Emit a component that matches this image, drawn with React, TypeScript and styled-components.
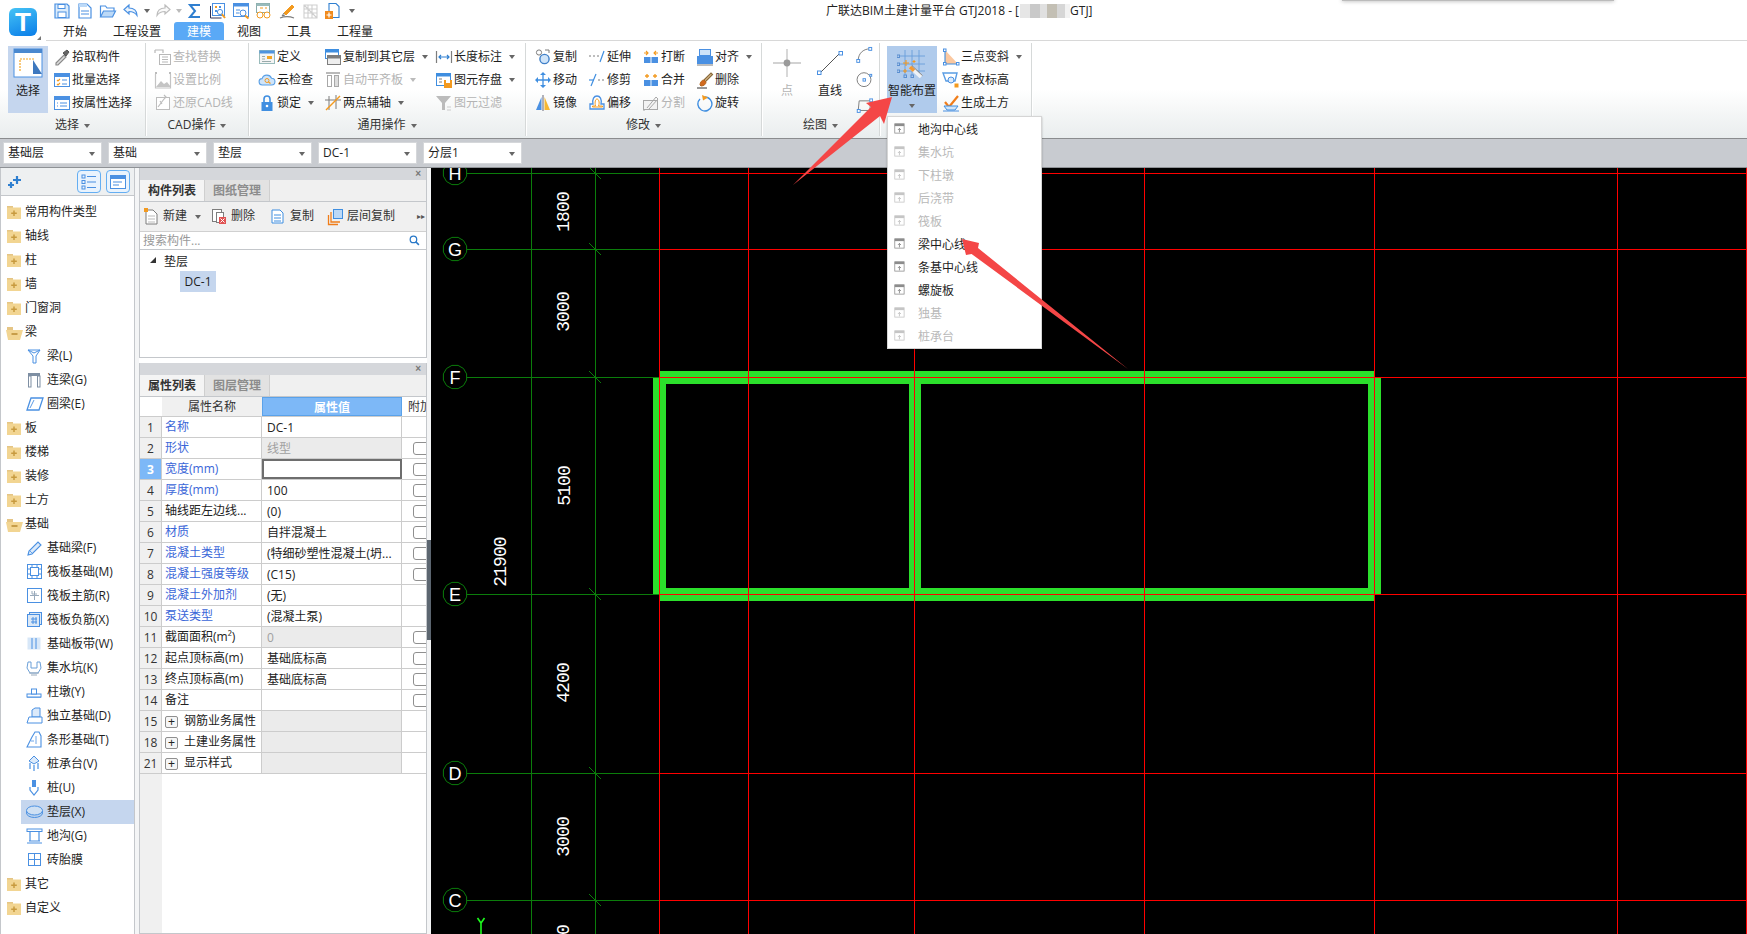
import React from 'react';
import styled, { createGlobalStyle } from 'styled-components';

const FONT = `"Open Sans", "Noto Sans CJK SC", sans-serif`;
const B = '#4a90e2';
const LB = '#bcd9f7';
const O = '#f39a1f';
const G = '#a8a8a8';
const GD = '#7d7d7d';

const Global = createGlobalStyle`
  html, body { margin: 0; padding: 0; overflow: hidden; background: #fff; }
  body { font: 12px/1.2 ${FONT}; color: #1e1e1e; }
`;

const P = (d: string, c = B, w = 1.2, f = 'none') => <path d={d} stroke={c} strokeWidth={w} fill={f} />;
const R = (x: number, y: number, w: number, h: number, f: string, s = 'none') => (
  <rect x={x} y={y} width={w} height={h} fill={f} stroke={s} />
);

const windowIcon = (inner: React.ReactNode, c = B) => (
  <>
    {R(1.5, 2.5, 15, 13, '#fff', c)}
    {R(1.5, 2.5, 15, 3, c, c)}
    {inner}
  </>
);

const ICONS: Record<string, React.ReactNode> = {
  save: <>{P('M2 2h12l2 2v12H2z', B, 1.2, '#dcecfb')}{R(5, 2.5, 7, 4, '#fff', B)}{R(5, 10, 8, 5.5, '#fff', B)}</>,
  newdoc: <>{P('M3 2h8l4 4v10H3z', B, 1.2, '#fff')}{R(3, 2, 8, 3, LB)}{P('M5 9h8M5 12h8', B)}</>,
  open: <>{P('M1.5 15V4h5l1.5 2h7v3', B, 1.2, '#fff')}{P('M1.5 15l3-6h12l-3 6z', B, 1.2, LB)}</>,
  undo: <>{P('M7 3L2 7.5 7 12V9.5c4 0 6 1 8 4 0-5-3-7.5-8-7.5z', B, 1.2, '#eaf3fc')}</>,
  redo: <>{P('M11 3l5 4.5L11 12V9.5c-4 0-6 1-8 4 0-5 3-7.5 8-7.5z', '#bdbdbd', 1.2, '#fafafa')}</>,
  sigma: <>{P('M14 3H4l5 6-5 6h10', '#2f7fd0', 2)}</>,
  qaDots: <>{R(3.5, 1.5, 12, 12, '#fff', B)}{R(6, 4, 2, 2, O)}{R(10, 4, 2, 2, B)}{R(6, 8, 2, 2, B)}{R(10, 8, 2, 2, B)}{P('M1.5 4v12h11', '#335', 1)}{P('M12 11l4 5', O, 2)}<circle cx="11" cy="10" r="2.6" fill="#fff" stroke={B} /></>,
  qaFind: <>{R(1.5, 1.5, 15, 13, '#fff', B)}{R(1.5, 1.5, 15, 3, B)}{P('M4 8h4M4 11h3', B)}<circle cx="11" cy="11" r="3" fill="#fff" stroke={B} />{P('M13 13.5l3.5 3', O, 2)}</>,
  qaGlass: <>{R(1.5, 1.5, 13, 9, '#fff', '#8aa')}{R(1.5, 1.5, 13, 2.5, '#9bb')}{P('M5 6h3M10 6h2', O)}<circle cx="5" cy="13" r="3" fill="#fff" stroke={O} /><circle cx="12" cy="13" r="3" fill="#fff" stroke={O} /></>,
  qaPen: <>{P('M6 11L14 3l2 2-8 8z', O, 1, O)}{P('M6 11l-2 3 3-1', '#777', 1)}{P('M2 16c5-2 9-2 14 0', GD, 1.2)}</>,
  qaGrid: <>{P('M3 3h13v13H3zM3 7h13M3 11h13M7 3v13M11 3v13M3 3l13 13', '#cfcfcf', 1.1)}</>,
  qaPlus: <>{P('M5 1.5h7l3 3v11H5z', '#2f7fd0', 1.1, '#fff')}{R(1, 9, 8, 8, '#f08a1d')}{P('M5 10.5v5M2.5 13h5', '#fff', 1.2)}</>,
  select: <>{R(1, 1, 28, 28, '#fff', B)}{R(1, 1, 28, 4, '#4a88cf')}<path d="M7 23V11h15" stroke="#f5a623" strokeWidth="1.2" strokeDasharray="2 1" fill="none" /><path d="M20 12v14h9z" fill="#3d78bf" /></>,
  pick: <>{P('M3 15l8-8 2 2-8 8H3z', '#8a8a8a', 1.2, '#ddd')}{P('M10 5l3 3 3-4-2-2z', '#555', 1, '#666')}</>,
  batch: windowIcon(<>{P('M4 9l1 1 2-2M4 13l1 1 2-2', O, 1.1)}{P('M9 9h5M9 13h5', B)}</>),
  propsel: windowIcon(<>{P('M4 9h1M4 12h1M7 9h7M7 12h7', B)}</>),
  gFind: <>{P('M1 2h8v3M1 2v3', '#b8b8b8')}{R(5.5, 6.5, 11, 10, '#fff', '#b8b8b8')}{P('M8 9h6M8 11.5h6M8 14h6', '#b8b8b8')}</>,
  gScale: <>{P('M1.5 3v14h15V3', '#c4c4c4')}<path d="M2 16l5-6 3 3 3-2 4 5z" fill="#c4c4c4" />{R(1, 1, 2, 2, '#bbb')}{R(15, 1, 2, 2, '#bbb')}</>,
  gRestore: <>{R(2.5, 3.5, 13, 12, '#fff', '#bdbdbd')}{P('M4 13L10 5M6 7l2 3', '#bdbdbd', 1.2)}{P('M10 1l2 2-2 2', '#bdbdbd')}</>,
  define: <>{R(1.5, 2.5, 15, 13, '#f4f4f4', '#9bb')}{R(1.5, 2.5, 15, 3, '#4f93de')}{R(9, 8, 5, 3, '#f5a623')}{P('M4 8.5h3M4 11h3M4 13.5h9', '#9aa')}</>,
  cloud: <>{P('M4.5 14a3.2 3.2 0 0 1-.4-6.4 5 5 0 0 1 9.4-.4A3.4 3.4 0 0 1 13.6 14z', '#5aa0e6', 1.1, '#cfe4f9')}<circle cx="9" cy="9.5" r="2" fill="none" stroke={O} />{P('M10.5 11l2 1.5', O)}</>,
  lock: <>{P('M6 8V5a3 3 0 0 1 6 0v3', '#3f8ee0', 1.6)}{R(3.5, 8, 11, 9, '#3f8ee0')}<circle cx="9" cy="12" r="1.3" fill="#fff" /></>,
  copyto: <>{R(1.5, 1.5, 13, 9, '#fff', '#3f8ee0')}{R(1.5, 1.5, 13, 3, '#3f8ee0')}{R(3.5, 7.5, 13, 9, '#eee', GD)}{R(3.5, 7.5, 13, 3, GD)}</>,
  gAuto: <>{P('M2 2h14', G, 1.6)}{R(3.5, 4.5, 4, 11, '#fff', G)}{R(10.5, 4.5, 4, 11, '#ddd', G)}</>,
  twoPt: <>{P('M5 2v14M12 1v14M1 6h16', GD, 1)}{P('M2 16L16 2', O, 1.4)}</>,
  length: <>{P('M1.5 3v12M16.5 3v12', GD)}{P('M4 9h10M6 7L4 9l2 2M12 7l2 2-2 2', '#2f7fd0')}</>,
  saveEl: <>{R(1.5, 2.5, 14, 12, '#fff', '#3f8ee0')}{R(1.5, 2.5, 14, 3, '#3f8ee0')}{P('M4 8h3M4 11h3', GD)}{R(9, 9, 8, 8, O)}{R(11, 9, 4, 3, '#fff')}</>,
  gFilter: <><path d="M1 2h15l-6 7v7H7V9z" fill="#bbb" />{P('M12 13h4M12 16h4', '#ccc')}</>,
  copy: <><circle cx="5" cy="4.5" r="2.6" fill="#fff" stroke={GD} /><circle cx="10.5" cy="11" r="4.6" fill="#cfe4f9" stroke="#3f7fc8" strokeWidth="1.4" />{P('M11 2h4v3', GD, 1)}</>,
  extend: <>{P('M1 8h2M5 8h2M9 8h2', GD, 1)}{P('M12 14l4-11', '#3f8ee0', 1.2)}</>,
  trim: <>{P('M1 9h5', '#3f8ee0', 1.2)}{P('M10 9h2M14 9h2', GD, 1)}{P('M3 15l5-12', '#3f8ee0', 1.2)}</>,
  breakI: <>{R(2, 9, 6.5, 6, '#4a90e2')}{R(9.5, 9, 6.5, 6, '#4a90e2')}{P('M2 5h4M4 3l2 2-2 2M16 5h-4M14 3l-2 2 2 2', O, 1.1)}</>,
  merge: <>{R(2, 9, 14, 6, '#4a90e2')}{P('M9 9v6', '#cfe4f9')}{P('M5 3v4M3 5h4M13 3v4M11 5h4', O, 1.3)}</>,
  alignI: <>{R(3.5, 1.5, 11, 6, '#cfe4f9', B)}{R(1.5, 8.5, 15, 7, '#4a90e2', B)}{P('M1 17h16', GD, 1)}</>,
  move: <>{P('M9 4v10M4 9h10', '#3f8ee0', 1.3)}<path d="M9 1l3 3H6zM9 17l3-3H6zM1 9l3-3v6zM17 9l-3-3v6z" fill="#3f8ee0" /></>,
  del: <>{P('M8 9l7-7 1.5 1.5-7 7', '#8a6a3a', 1.2, '#e6c79a')}{P('M4 14c0-3 2-5 4-5l2 2c0 2-2 4-5 4z', '#b5651d', 1, '#d2691e')}{P('M1 17h10', '#333', 1)}</>,
  mirror: <><path d="M7.5 3v13H2z" fill="#4a90e2" /><path d="M10.5 3v13H16z" fill="#f7b733" />{P('M9 1v16', '#667', 1)}</>,
  offset: <>{P('M2 15V10h3c-1-5 1-8 4-8s5 3 4 8h3v5z', '#4a90e2', 1.3, '#fff')}{P('M4.5 13v-1h3c-1-4 0-7 1.5-7s3 3 1.5 7h4v1z', O, 1, '#fff')}</>,
  split: <>{R(1.5, 6.5, 14, 9, '#f3f3f3', G)}{P('M5 14l9-11 2 2-9 10', G, 1)}{P('M1 16h2', G)}</>,
  rotate: <>{P('M9 3a7 7 0 1 1-5 2', '#3f8ee0', 1.4)}<path d="M6 1l6 2.5-5 3z" fill={O} /></>,
  point: <>{P('M15 1v28M1 15h28', '#c4c4c4', 1.3)}<circle cx="15" cy="15" r="3.4" fill="#9a9a9a" /></>,
  line: <>{P('M5 25L25 5', '#555', 1)}{R(2.5, 23, 3.5, 3.5, '#fff', B)}{R(24, 3.5, 3.5, 3.5, '#fff', B)}</>,
  arc: <>{P('M3 15C3 8 8 3 15 3', GD, 1)}{R(1.5, 14, 3, 3, '#fff', B)}{R(14, 1.5, 3, 3, '#fff', B)}</>,
  circleI: <><circle cx="9" cy="9" r="7.2" fill="#fff" stroke={GD} />{R(8, 8, 2.5, 2.5, '#fff', B)}{R(15, 3.5, 2, 2, '#fff', B)}</>,
  rectI: <>{P('M3 14L4 4h12l-1 10z', GD, 1)}{R(2, 13, 3, 3, '#fff', B)}{R(15, 2, 3, 3, '#fff', B)}</>,
  smart: <>
    {P('M1 8h27M1 16h27M1 23h27M8 2v25M15 2v25M22 2v25', '#6a9edb', 0.9)}
    {R(0, 7, 2.5, 2.5, '#b0cbec', '#5b8fd0')}{R(0, 15, 2.5, 2.5, '#b0cbec', '#5b8fd0')}{R(0, 22, 2.5, 2.5, '#b0cbec', '#5b8fd0')}
    {R(7, 27, 2.5, 2.5, '#b0cbec', '#5b8fd0')}{R(14, 27, 2.5, 2.5, '#b0cbec', '#5b8fd0')}
    {P('M13 19l11 10', '#eef2f6', 3.6)}{P('M13 19l4 3.6', '#f29a35', 3.6)}{P('M15 17.6l10.5 10', '#8a7a66', 0.8)}
    {P('M9 12v6M6 15h6M17 12v3M15.5 13.5h3M8 21v4M6 23h4', O, 1.1)}
  </>,
  three: <><path d="M3 2l13 14H3z" fill="#fbc8a0" />{P('M3 2v14h13', '#3f8ee0', 1.1)}{R(1.5, 1, 2.5, 2.5, '#fff', B)}{R(1.5, 14.5, 2.5, 2.5, '#fff', B)}{R(14.5, 14.5, 2.5, 2.5, '#fff', B)}</>,
  height: <>{P('M1 2h14l-2 8H4z', '#5a9de4', 1.4, '#fff')}<circle cx="9" cy="9" r="3" fill="#dcebfa" stroke={B} />{R(12.5, 12.5, 4, 4, O)}</>,
  earth: <>{P('M3 8l4 5 9-11', '#f07d1a', 2.2)}{P('M2 12h14l-3 4H5z', '#3f8ee0', 1, '#cfe4f9')}{P('M1 17h16', B, 1)}</>,
  itemUp: <>{R(1, 1, 12, 12, '#fff', '#8c8c8c')}{R(1, 1, 12, 3, '#8c8c8c')}{P('M7 12V7M5 9l2-2 2 2', '#7a7a7a', 1)}</>,
  sparkle: <>{P('M10 3v8M6 7h8', '#2f7fd0', 2.2)}{P('M4 9v6M1 12h6', '#2f7fd0', 2.2)}</>,
  listMode: <>{R(2, 2, 3, 3, 'none', B)}{R(2, 7.5, 3, 3, 'none', B)}{R(2, 13, 3, 3, 'none', B)}{P('M7 3.5h9M7 9h9M7 14.5h9', B, 1.2)}</>,
  cardMode: <>{R(1.5, 2.5, 15, 13, '#fff', B)}{R(1.5, 2.5, 15, 3.5, B)}{P('M4 9h9M4 12h6', B)}</>,
  fClosed: <>{R(1, 3, 6, 3, '#e5c585')}{R(1, 4.5, 14, 11.5, '#f2d592')}{P('M8 7.5v5.5M5.2 10.2h5.6', '#c79a3f', 1.5)}</>,
  fOpen: <>{R(1, 4, 6, 3, '#e5c585')}<path d="M0 7h17l-3 10H2z" fill="#f2d592" />{P('M5.5 11h6', '#b98a30', 1.5)}</>,
  beam: <>{P('M2 3h12L10 9v7H7V9z', B, 1, '#fff')}{P('M2 3l6 3 6-3', B, 1)}</>,
  lianL: <>{R(2, 2, 12, 3, '#7e8fa3')}{R(2.5, 5, 2.5, 11, '#fff', '#7e8fa3')}{R(11.5, 5, 2.5, 11, '#fff', '#7e8fa3')}</>,
  ring: <>{P('M5 3h12l-4 12H1z', B, 1.3, '#fff')}{P('M4 13L8 5', B, .9)}</>,
  pen: <>{P('M2 16l1-4L12 3l3 3-9 9z', B, 1.1, '#dceafa')}{P('M4 12l3 3', B, .8)}</>,
  raft: <>{R(1.5, 1.5, 14, 14, '#fff', B)}{R(4.5, 4.5, 8, 8, '#fff', B)}{P('M1.5 6h3M1.5 11h3M12 6h3M12 11h3M6 1.5v3M11 1.5v3M6 12v3M11 12v3', B, 1)}</>,
  raftM: <>{R(1.5, 1.5, 14, 14, '#fff', B)}{P('M8.5 4v9M4 8.5h9M6 4v3M6 7h5', '#9ab', 1)}</>,
  raftN: <>{R(3.5, 1.5, 12, 12, '#dbe8f6', B)}{R(1.5, 3.5, 12, 12, '#dbe8f6', B)}{P('M5 8h6M5 11h6M7 6v7M10 6v7', B, 1)}</>,
  band: <>{R(1.5, 2.5, 13, 12, '#d7e7f8')}{P('M6 3v11M10 3v11', '#4a90e2', 1, 'none')}</>,
  pit: <>{P('M2 3l3 0 0 6h6V3h3l1 6-3 5H4l-3-5z', '#6a9fd8', 1, '#fff')}{P('M3 14h10M5 16h6', '#9ab', 1)}</>,
  pier: <>{P('M1 14h14', B, 1.2)}{R(1, 11, 14, 3, '#fff', B)}{R(5.5, 6, 5, 5, '#fff', B)}</>,
  isolated: <>{P('M6 10V3l3-2h5v9z', B, 1, '#dceafa')}{P('M1 16l2-6h13v6z', B, 1, '#fff')}</>,
  strip: <>{P('M1 16l3-6 2-4 3-5h4l2 4v11z', B, 1.1, '#fff')}{P('M5 10l3 0M10 5v8', B, .8)}</>,
  cap: <>{P('M8 1l5 5-5 3-5-3z', B, 1, '#dceafa')}{P('M4 8v6M8 10v6M12 8v6', B, 1.2)}</>,
  pile: <>{R(6, 1, 4, 8, B)}{P('M4 8l0 3 4 5 4-5V8', B, 1.2, '#fff')}</>,
  disc: <><ellipse cx="8.5" cy="10" rx="8" ry="4.5" fill="#bcd3ee" stroke={B} />{P('M.5 8c0 3 16 3 16 0', B)}<ellipse cx="8.5" cy="7.5" rx="8" ry="4.5" fill="#cfe0f3" stroke={B} /></>,
  trench: <>{R(1, 2, 15, 2.5, '#fff', B)}{P('M4 4.5v9M13 4.5v9M1 16h15M3 14h11', B, 1.2)}</>,
  brick: <>{R(2.5, 2.5, 12, 12, '#fff', B)}{P('M8.5 3v11M3 8.5h11', B, 1)}</>,
  newI: <>{P('M3 2h7l4 4v10H3z', GD, 1, '#fff')}{P('M5 8h7M5 11h7M5 14h7', '#bbb', 1)}{R(1, 0, 4, 4, O)}</>,
  delI: <>{R(1.5, 1.5, 9, 12, '#fff', GD)}{R(5.5, 4.5, 7, 10, '#fff', GD)}{R(8, 9, 7, 7, '#e05252')}{P('M9.5 10.5l4 4M13.5 10.5l-4 4', '#fff', 1)}</>,
  copyI: <>{P('M2 2h8l3 3v10H2z', '#3f8ee0', 1, '#fff')}{P('M4 7h7M4 10h7M4 13h7', '#3f8ee0', 1)}</>,
  layerI: <>{R(6.5, 1.5, 9, 9, '#bcd9f7', '#3f8ee0')}{P('M4 4v10h9M1.5 7v9.5H11', '#f07d1a', 1.3)}</>,
  search: <><circle cx="7" cy="7" r="4.2" fill="none" stroke="#2878c8" strokeWidth="1.6" />{P('M10 10l4 4', '#2878c8', 2)}</>,
};

const Glyph = ({ name, size = 18 }: { name: string; size?: number }) => (
  <svg width={size} height={size} viewBox={size === 30 ? '0 0 30 30' : '0 0 18 18'}>
    {ICONS[name]}
  </svg>
);

/* ---------- shell ---------- */
const Shell = styled.div`
  position: relative;
  width: 1747px;
  height: 934px;
  overflow: hidden;
  display: flex;
  flex-direction: column;
  background: #fff;
`;
const TitleBar = styled.header`
  height: 40px;
  display: flex;
  border-bottom: 1px solid #d8d8d8;
  flex: none;
`;
const LogoArea = styled.div`
  position: relative;
  width: 46px;
  height: 41px;
  background: #fff;
  flex: none;
  margin-bottom: -1px;
`;
const LogoTile = styled.div`
  position: absolute;
  left: 9px;
  top: 8px;
  width: 28px;
  height: 28px;
  border-radius: 6px;
  background: linear-gradient(160deg, #45c3f5, #0a7de8);
  color: #fff;
  font: 700 26px/28px "Liberation Sans", sans-serif;
  text-align: center;
`;
const LogoCorner = styled.i`
  position: absolute;
  left: 37px;
  top: 36px;
  border-style: solid;
  border-width: 0 0 4px 4px;
  border-color: transparent transparent #777 transparent;
`;
const TitleColumn = styled.div`
  display: flex;
  flex-direction: column;
  flex: 1;
`;
const QuickRow = styled.div`
  height: 22px;
  display: flex;
  align-items: center;
`;
const QuickBar = styled.div`
  width: 780px;
  flex: none;
  display: flex;
  align-items: center;
  height: 22px;
`;
const QuickSlot = styled.span<{ $w: number }>`
  width: ${p => p.$w}px;
  flex: none;
  display: flex;
  align-items: center;
  justify-content: center;
`;
const WindowTitle = styled.div`
  white-space: nowrap;
  display: flex;
  align-items: center;
  font-size: 12px;
  color: #222;
`;
const Redacted = styled.span`
  width: 50px;
  height: 14px;
  margin-left: 1px;
  background: linear-gradient(90deg, #e6e6e6 0 20%, #c9c9c9 20% 40%, #e0e0e0 40% 55%, #c3bfb4 55% 75%, #d6d6d6 75% 90%, #f2f2f2 90%);
`;
const TabRow = styled.nav`
  height: 18px;
  display: flex;
  margin-left: 4px;
`;
const Tab = styled.div<{ $active?: boolean }>`
  padding: 0 13px;
  height: 18px;
  line-height: 20px;
  color: ${p => (p.$active ? '#fff' : '#222')};
  background: ${p => (p.$active ? '#5aa9f6' : 'transparent')};
  border-radius: 3px 3px 0 0;
`;
const ShadowStrip = styled.div`
  position: absolute;
  left: 1342px;
  top: -2px;
  width: 272px;
  height: 3px;
  background: #bbb;
  box-shadow: 0 0 4px rgba(0, 0, 0, 0.35);
`;

/* ---------- ribbon ---------- */
const Ribbon = styled.section`
  height: 97px;
  flex: none;
  display: flex;
  border-bottom: 1px solid #8a8c8e;
  background: linear-gradient(#fff 0, #fff 50%, #f4f6f6 75%, #e9edee 100%);
`;
const Group = styled.div<{ $w: number }>`
  width: ${p => p.$w}px;
  flex: none;
  box-sizing: border-box;
  margin: 2px 0;
  display: flex;
  flex-direction: column;
  border-right: 1px solid #d6d9d9;
  box-shadow: 1px 0 0 #fff;
`;
const GroupBody = styled.div<{ $pad?: number; $gap?: number }>`
  height: 71px;
  flex: none;
  box-sizing: border-box;
  padding: 2px 0 0 ${p => p.$pad ?? 8}px;
  display: flex;
  gap: ${p => p.$gap ?? 0}px;
`;
const GroupLabel = styled.div`
  height: 22px;
  padding-top: 1px;
  box-sizing: border-box;
  display: flex;
  align-items: center;
  justify-content: center;
  gap: 5px;
  color: #333;
`;
const Caret = styled.i<{ $tone?: string }>`
  display: inline-block;
  flex: none;
  border-style: solid;
  border-width: 4px 3.5px 0;
  border-color: ${p => p.$tone ?? '#666'} transparent transparent;
`;
const BigButton = styled.div<{ $w: number; $bg?: string; $off?: boolean }>`
  width: ${p => p.$w}px;
  height: 67px;
  margin-top: 1px;
  box-sizing: border-box;
  padding-top: 2px;
  flex: none;
  display: flex;
  flex-direction: column;
  align-items: center;
  background: ${p => p.$bg ?? 'transparent'};
  color: ${p => (p.$off ? '#b4b4b4' : '#1e1e1e')};
`;
const BigText = styled.span`
  line-height: 18px;
  margin-top: 4px;
  margin-bottom: 4px;
  white-space: nowrap;
`;
const Column = styled.div<{ $w?: number }>`
  width: ${p => (p.$w ? `${p.$w}px` : 'auto')};
  flex: none;
  display: flex;
  flex-direction: column;
`;
const SmallItem = styled.div<{ $off?: boolean }>`
  height: 23px;
  display: flex;
  align-items: center;
  gap: 1px;
  white-space: nowrap;
  color: ${p => (p.$off ? '#b4b4b4' : '#1e1e1e')};
`;
const SmallText = styled.span`
  padding-top: 1px;
`;
const SmallCaret = styled(Caret)`
  margin-left: 6px;
`;

const Small = ({ icon, text, off, caret }: { icon: string; text: string; off?: boolean; caret?: boolean }) => (
  <SmallItem $off={off}>
    <Glyph name={icon} />
    <SmallText>{text}</SmallText>
    {caret && <SmallCaret $tone={off ? '#bbb' : '#666'} />}
  </SmallItem>
);

const IconStack = styled.div`
  width: 36px;
  display: flex;
  flex-direction: column;
  align-items: center;
  padding-top: 1px;
  gap: 8px;
`;

/* ---------- combos ---------- */
const ComboBar = styled.div`
  height: 29px;
  flex: none;
  box-sizing: border-box;
  padding: 3px 0 0 3px;
  display: flex;
  gap: 6px;
  background: #c8cbd0;
  border-bottom: 1px solid #8f9296;
`;
const Combo = styled.div`
  width: 99px;
  height: 22px;
  box-sizing: border-box;
  padding: 1px 6px 0 4px;
  background: #fff;
  border: 1px solid #d5d7da;
  display: flex;
  align-items: center;
  justify-content: space-between;
`;

/* ---------- main ---------- */
const Main = styled.main`
  flex: 1;
  min-height: 0;
  display: flex;
`;
const Sidebar = styled.aside`
  width: 135px;
  flex: none;
  box-sizing: border-box;
  border-left: 1px solid #c4c7cb;
  border-right: 1px solid #c4c7cb;
  display: flex;
  flex-direction: column;
`;
const SideTop = styled.div`
  height: 27px;
  flex: none;
  background: #eef0f1;
  border-bottom: 1px solid #c4c7cb;
  display: flex;
  align-items: center;
  padding: 0 4px 0 6px;
`;
const ModeButton = styled.div`
  width: 24px;
  height: 23px;
  box-sizing: border-box;
  border: 1px solid #64aef2;
  border-radius: 4px;
  background: #e9f3fd;
  margin-left: 5px;
  display: flex;
  align-items: center;
  justify-content: center;
`;
const SpacerGrow = styled.span`
  flex: 1;
`;
const Tree = styled.div`
  padding-top: 4px;
`;
const TreeRow = styled.div<{ $child?: boolean; $sel?: boolean }>`
  height: 24px;
  display: flex;
  align-items: center;
  box-sizing: border-box;
  gap: ${p => (p.$child ? 3 : 1)}px;
  margin-left: ${p => (p.$child ? 20 : 0)}px;
  padding-left: 5px;
  background: ${p => (p.$sel ? '#c5d6ee' : 'transparent')};
  white-space: nowrap;
`;
const Gutter = styled.div`
  width: 4px;
  flex: none;
  background: #f4f5f6;
`;
const PanelColumn = styled.div`
  width: 288px;
  flex: none;
  display: flex;
  flex-direction: column;
  gap: 5px;
`;
const Panel = styled.section<{ $fill?: boolean }>`
  flex: ${p => (p.$fill ? '1' : 'none')};
  height: ${p => (p.$fill ? 'auto' : '190px')};
  box-sizing: border-box;
  border: 1px solid #c4c7cb;
  border-top: none;
  overflow: hidden;
  display: flex;
  flex-direction: column;
`;
const PanelHead = styled.div`
  height: 12px;
  flex: none;
  background: #d5d7db;
  color: #777;
  font: 700 10px/12px "Liberation Sans", sans-serif;
  text-align: right;
  padding-right: 5px;
`;
const PanelTabs = styled.div`
  height: 21px;
  flex: none;
  display: flex;
  background: #f0f0f0;
  border-bottom: 1px solid #c4c7cb;
`;
const PanelTab = styled.div<{ $on?: boolean }>`
  width: 64px;
  text-align: center;
  line-height: 21px;
  font-weight: 700;
  color: ${p => (p.$on ? '#333' : '#8c8c8c')};
  background: ${p => (p.$on ? '#f4f4f4' : '#e2e2e2')};
  border-right: 1px solid #cfcfcf;
`;
const PanelTools = styled.div`
  height: 29px;
  flex: none;
  display: flex;
  align-items: center;
  background: #f0f0f0;
  border-bottom: 1px solid #d0d0d0;
  padding-left: 3px;
`;
const ToolButton = styled.div<{ $w: number }>`
  width: ${p => p.$w}px;
  flex: none;
  display: flex;
  align-items: center;
  gap: 2px;
  white-space: nowrap;
  color: #333;
`;
const MoreMark = styled.span`
  font: 8px "DejaVu Sans", sans-serif;
  color: #555;
  margin-left: 18px;
`;
const SearchBox = styled.div`
  height: 18px;
  flex: none;
  display: flex;
  align-items: center;
  justify-content: space-between;
  padding: 1px 4px 0 3px;
  box-sizing: border-box;
  color: #999;
  border-bottom: 1px solid #c4c7cb;
`;
const CompTree = styled.div`
  flex: 1;
  padding: 0 0 0 24px;
`;
const CompHead = styled.div`
  position: relative;
  height: 21px;
  line-height: 23px;
`;
const CompTriangle = styled.i`
  position: absolute;
  left: -14px;
  top: 7px;
  border-style: solid;
  border-width: 0 0 6px 6px;
  border-color: transparent transparent #333 transparent;
`;
const CompItem = styled.div`
  width: 36px;
  height: 21px;
  line-height: 21px;
  margin-left: 16px;
  text-align: center;
  background: #c5d6ee;
`;

/* ---------- table ---------- */
const Row = styled.div`
  display: grid;
  grid-template-columns: 22px 100px 140px 25px;
  height: 21px;
  flex: none;
  box-sizing: border-box;
  border-bottom: 1px solid #cccccc;
`;
const HeadRow = styled(Row)`
  height: 20px;
`;
const HeadBlank = styled.div`
  background: #fff;
`;
const HeadCell = styled.div<{ $on?: boolean }>`
  text-align: center;
  line-height: 19px;
  overflow: hidden;
  white-space: nowrap;
  background: ${p => (p.$on ? '#7db8f7' : '#f0f0f0')};
  color: ${p => (p.$on ? '#fff' : '#333')};
  font-weight: ${p => (p.$on ? 700 : 400)};
  border: ${p => (p.$on ? '1px solid #5aa2ea' : 'none')};
`;
const HeadCut = styled(HeadCell)`
  text-align: left;
  padding-left: 6px;
  background: #fff;
  box-sizing: border-box;
`;
const IndexCell = styled.div<{ $on?: boolean }>`
  text-align: center;
  line-height: 22px;
  height: 20px;
  overflow: hidden;
  background: ${p => (p.$on ? '#7db8f7' : '#f0f0f0')};
  color: ${p => (p.$on ? '#fff' : '#333')};
  font-weight: ${p => (p.$on ? 700 : 400)};
  border-right: 1px solid #cccccc;
`;
const NameCell = styled.div<{ $blue?: boolean }>`
  padding: 1px 0 0 3px;
  box-sizing: border-box;
  height: 20px;
  color: ${p => (p.$blue ? '#3a66d8' : '#222')};
  border-right: 1px solid #cccccc;
  white-space: nowrap;
  overflow: hidden;
  display: flex;
  align-items: center;
  gap: 6px;
`;
const ValueCell = styled.div<{ $shade?: boolean; $grey?: boolean; $sel?: boolean }>`
  box-sizing: border-box;
  height: 20px;
  padding-left: ${p => (p.$sel ? 3 : 5)}px;
  line-height: 22px;
  color: ${p => (p.$grey ? '#a0a0a0' : '#222')};
  background: ${p => (p.$shade ? '#ebebeb' : '#fff')};
  border-right: 1px solid #cccccc;
  border: ${p => (p.$sel ? '2px solid #6e6e6e' : undefined)};
  white-space: nowrap;
  overflow: hidden;
`;
const ExtraCell = styled.div`
  overflow: hidden;
  display: flex;
  align-items: center;
  padding-left: 11px;
`;
const CheckBox = styled.i`
  width: 18px;
  height: 13px;
  flex: none;
  box-sizing: border-box;
  border: 1px solid #8f8f8f;
  border-radius: 3px;
  background: #fff;
`;
const PlusBox = styled.i`
  width: 13px;
  height: 12px;
  flex: none;
  box-sizing: border-box;
  border: 1px solid #8f8f8f;
  border-radius: 2px;
  background: #f6f6f6;
  color: #222;
  font: 400 12px/10px "Liberation Sans", sans-serif;
  text-align: center;
`;
const FootIndex = styled.div`
  width: 22px;
  flex: 1;
  background: #f0f0f0;
`;

/* ---------- splitter + canvas ---------- */
const Splitter = styled.div`
  width: 4px;
  flex: none;
  background: #f4f5f6;
  position: relative;
`;
const Grip = styled.div`
  position: absolute;
  top: 372px;
  left: 0;
  width: 4px;
  height: 100px;
  background: #5c6670;
`;
const Canvas = styled.div`
  flex: 1;
  background: #000;
  min-width: 0;
  line-height: 0;
`;

/* ---------- overlays ---------- */
const Menu = styled.div`
  position: absolute;
  left: 887px;
  top: 116px;
  width: 155px;
  box-sizing: border-box;
  padding: 1px 0 0;
  background: #fff;
  border: 1px solid #d5d5d5;
  box-shadow: 0 1px 2px rgba(0, 0, 0, 0.25);
  z-index: 3;
`;
const MenuItem = styled.div<{ $off?: boolean }>`
  height: 23px;
  display: flex;
  align-items: center;
  gap: 10px;
  padding: 1px 0 0 6px;
  box-sizing: border-box;
  color: ${p => (p.$off ? '#b9b9b9' : '#1e1e1e')};
`;
const MenuIcon = styled.span<{ $off?: boolean }>`
  display: flex;
  opacity: ${p => (p.$off ? 0.5 : 1)};
`;
const ArrowLayer = styled.svg`
  position: absolute;
  left: 0;
  top: 0;
  pointer-events: none;
  z-index: 4;
`;

const SIDE: [string, string, boolean?, boolean?][] = [
  ['fClosed', '常用构件类型'], ['fClosed', '轴线'], ['fClosed', '柱'], ['fClosed', '墙'], ['fClosed', '门窗洞'],
  ['fOpen', '梁'], ['beam', '梁(L)', true], ['lianL', '连梁(G)', true], ['ring', '圈梁(E)', true],
  ['fClosed', '板'], ['fClosed', '楼梯'], ['fClosed', '装修'], ['fClosed', '土方'],
  ['fOpen', '基础'], ['pen', '基础梁(F)', true], ['raft', '筏板基础(M)', true], ['raftM', '筏板主筋(R)', true],
  ['raftN', '筏板负筋(X)', true], ['band', '基础板带(W)', true], ['pit', '集水坑(K)', true], ['pier', '柱墩(Y)', true],
  ['isolated', '独立基础(D)', true], ['strip', '条形基础(T)', true], ['cap', '桩承台(V)', true], ['pile', '桩(U)', true],
  ['disc', '垫层(X)', true, true], ['trench', '地沟(G)', true], ['brick', '砖胎膜', true],
  ['fClosed', '其它'], ['fClosed', '自定义'],
];

type PropRow = { n: string; name: string; value?: string; blue?: boolean; check?: boolean; shade?: boolean; grey?: boolean; sel?: boolean; plus?: boolean };
const PROPS: PropRow[] = [
  { n: '1', name: '名称', value: 'DC-1', blue: true },
  { n: '2', name: '形状', value: '线型', blue: true, check: true, shade: true, grey: true },
  { n: '3', name: '宽度(mm)', value: '', blue: true, check: true, sel: true },
  { n: '4', name: '厚度(mm)', value: '100', blue: true, check: true },
  { n: '5', name: '轴线距左边线...', value: '(0)', check: true },
  { n: '6', name: '材质', value: '自拌混凝土', blue: true, check: true },
  { n: '7', name: '混凝土类型', value: '(特细砂塑性混凝土(坍...', blue: true, check: true },
  { n: '8', name: '混凝土强度等级', value: '(C15)', blue: true, check: true },
  { n: '9', name: '混凝土外加剂', value: '(无)', blue: true },
  { n: '10', name: '泵送类型', value: '(混凝土泵)', blue: true },
  { n: '11', name: '截面面积(m²)', value: '0', check: true, shade: true, grey: true },
  { n: '12', name: '起点顶标高(m)', value: '基础底标高', check: true },
  { n: '13', name: '终点顶标高(m)', value: '基础底标高', check: true },
  { n: '14', name: '备注', value: '', check: true },
  { n: '15', name: '钢筋业务属性', plus: true, shade: true },
  { n: '18', name: '土建业务属性', plus: true, shade: true },
  { n: '21', name: '显示样式', plus: true, shade: true },
];

const MENU: [string, boolean][] = [
  ['地沟中心线', false], ['集水坑', true], ['下柱墩', true], ['后浇带', true], ['筏板', true],
  ['梁中心线', false], ['条基中心线', false], ['螺旋板', false], ['独基', true], ['桩承台', true],
];

const AXES: [string, number][] = [['H', 173], ['G', 249], ['F', 377], ['E', 594], ['D', 773], ['C', 900]];
const RED_X = [659, 748, 914, 1144, 1374, 1617, 1746];
const DIMS: [string, number, number][] = [['1800', 563, 212], ['3000', 563, 312], ['5100', 564, 486], ['4200', 563, 683], ['3000', 563, 837], ['3000', 563, 945], ['21900', 500, 562]];
const WALL = '#2bdf2b';
const AXIS = '#0b7d0b';

const octagon = (cx: number, cy: number, r: number) =>
  Array.from({ length: 12 }, (_, i) => {
    const a = (Math.PI * 2 * i) / 12 + Math.PI / 12;
    return `${(cx + r * Math.cos(a)).toFixed(1)},${(cy + r * Math.sin(a)).toFixed(1)}`;
  }).join(' ');

const CadDrawing = () => (
  <svg width={1316} height={766} viewBox="431 168 1316 766" shapeRendering="crispEdges">
    <g fill={WALL}>
      <rect x={659} y={371} width={715} height={13} />
      <rect x={659} y={588} width={715} height={13} />
      <rect x={653} y={377} width={13} height={217} />
      <rect x={909} y={384} width={12} height={204} />
      <rect x={1368} y={377} width={13} height={217} />
    </g>
    {[531.5, 595.5].map(x => <line key={x} x1={x} x2={x} y1={168} y2={934} stroke={AXIS} />)}
    {AXES.map(([, y]) => (
      <g key={y}>
        <line x1={467} x2={659} y1={y + 0.5} y2={y + 0.5} stroke={AXIS} />
        <line x1={659} x2={1747} y1={y + 0.5} y2={y + 0.5} stroke="#ff0000" />
        <line x1={589} x2={601} y1={y - 6} y2={y + 6} stroke={AXIS} shapeRendering="auto" />
      </g>
    ))}
    {RED_X.map(x => <line key={x} x1={x + 0.5} x2={x + 0.5} y1={168} y2={934} stroke="#ff0000" />)}
    {AXES.map(([label, y]) => (
      <g key={label} shapeRendering="auto">
        <polygon points={octagon(455, y, 12)} fill="#000" stroke={AXIS} />
        <text x={455} y={y + 6.5} textAnchor="middle" fill="#fff" fontFamily="Liberation Sans" fontSize={18}>{label}</text>
      </g>
    ))}
    {DIMS.map(([t, x, y], i) => (
      <text
        key={i}
        transform={`translate(${x + 6} ${y}) rotate(-90)`}
        textAnchor="middle"
        fill="#fff"
        fontFamily="Liberation Mono"
        fontSize={18}
        letterSpacing={-0.9}
        shapeRendering="auto"
      >{t}</text>
    ))}
    <path d="M477.5 918l3.5 5 3.5-5M481 923v11" stroke="#1dfa1d" strokeWidth={1.6} fill="none" shapeRendering="auto" />
  </svg>
);

export default function App() {
  return (
    <Shell>
      <Global />
      <TitleBar>
        <LogoArea>
          <LogoTile>T</LogoTile>
          <LogoCorner />
        </LogoArea>
        <TitleColumn>
          <QuickRow>
            <QuickBar>
              <QuickSlot $w={4.5} />
              {['save', 'newdoc', 'open'].map(n => <QuickSlot key={n} $w={23}><Glyph name={n} /></QuickSlot>)}
              <QuickSlot $w={23}><Glyph name="undo" /></QuickSlot>
              <QuickSlot $w={9}><Caret /></QuickSlot>
              <QuickSlot $w={22}><Glyph name="redo" /></QuickSlot>
              <QuickSlot $w={10}><Caret $tone="#bbb" /></QuickSlot>
              {['sigma', 'qaDots', 'qaFind', 'qaGlass', 'qaPen', 'qaGrid', 'qaPlus'].map(n => <QuickSlot key={n} $w={23}><Glyph name={n} /></QuickSlot>)}
              <QuickSlot $w={14}><Caret /></QuickSlot>
            </QuickBar>
            <WindowTitle>
              <span>广联达BIM土建计量平台 GTJ2018 - [</span>
              <Redacted />
              <span>GTJ]</span>
            </WindowTitle>
          </QuickRow>
          <TabRow>
            {['开始', '工程设置', '建模', '视图', '工具', '工程量'].map(t => <Tab key={t} $active={t === '建模'}>{t}</Tab>)}
          </TabRow>
        </TitleColumn>
      </TitleBar>
      <ShadowStrip />

      <Ribbon>
        <Group $w={146}>
          <GroupBody $gap={5}>
            <BigButton $w={40} $bg="#c5d6ee">
              <Glyph name="select" size={30} />
              <BigText>选择</BigText>
            </BigButton>
            <Column>
              <Small icon="pick" text="拾取构件" />
              <Small icon="batch" text="批量选择" />
              <Small icon="propsel" text="按属性选择" />
            </Column>
          </GroupBody>
          <GroupLabel>选择<Caret /></GroupLabel>
        </Group>
        <Group $w={103}>
          <GroupBody $pad={8}>
            <Column>
              <Small icon="gFind" text="查找替换" off />
              <Small icon="gScale" text="设置比例" off />
              <Small icon="gRestore" text="还原CAD线" off />
            </Column>
          </GroupBody>
          <GroupLabel>CAD操作<Caret /></GroupLabel>
        </Group>
        <Group $w={277}>
          <GroupBody $pad={9}>
            <Column $w={66}>
              <Small icon="define" text="定义" />
              <Small icon="cloud" text="云检查" />
              <Small icon="lock" text="锁定" caret />
            </Column>
            <Column $w={111}>
              <Small icon="copyto" text="复制到其它层" caret />
              <Small icon="gAuto" text="自动平齐板" off caret />
              <Small icon="twoPt" text="两点辅轴" caret />
            </Column>
            <Column>
              <Small icon="length" text="长度标注" caret />
              <Small icon="saveEl" text="图元存盘" caret />
              <Small icon="gFilter" text="图元过滤" off />
            </Column>
          </GroupBody>
          <GroupLabel>通用操作<Caret /></GroupLabel>
        </Group>
        <Group $w={236}>
          <GroupBody>
            <Column $w={54}>
              <Small icon="copy" text="复制" />
              <Small icon="move" text="移动" />
              <Small icon="mirror" text="镜像" />
            </Column>
            <Column $w={54}>
              <Small icon="extend" text="延伸" />
              <Small icon="trim" text="修剪" />
              <Small icon="offset" text="偏移" />
            </Column>
            <Column $w={54}>
              <Small icon="breakI" text="打断" />
              <Small icon="merge" text="合并" />
              <Small icon="split" text="分割" off />
            </Column>
            <Column>
              <Small icon="alignI" text="对齐" caret />
              <Small icon="del" text="删除" />
              <Small icon="rotate" text="旋转" />
            </Column>
          </GroupBody>
          <GroupLabel>修改<Caret /></GroupLabel>
        </Group>
        <Group $w={118}>
          <GroupBody $pad={0}>
            <BigButton $w={50} $off>
              <Glyph name="point" size={30} />
              <BigText>点</BigText>
            </BigButton>
            <BigButton $w={36}>
              <Glyph name="line" size={30} />
              <BigText>直线</BigText>
            </BigButton>
            <IconStack>
              <Glyph name="arc" />
              <Glyph name="circleI" />
              <Glyph name="rectI" />
            </IconStack>
          </GroupBody>
          <GroupLabel>绘图<Caret /></GroupLabel>
        </Group>
        <Group $w={152}>
          <GroupBody $pad={7} $gap={5}>
            <BigButton $w={50} $bg="#b0cbec">
              <Glyph name="smart" size={30} />
              <BigText>智能布置</BigText>
              <Caret />
            </BigButton>
            <Column>
              <Small icon="three" text="三点变斜" caret />
              <Small icon="height" text="查改标高" />
              <Small icon="earth" text="生成土方" />
            </Column>
          </GroupBody>
        </Group>
      </Ribbon>

      <ComboBar>
        {['基础层', '基础', '垫层', 'DC-1', '分层1'].map(t => <Combo key={t}><span>{t}</span><Caret /></Combo>)}
      </ComboBar>

      <Main>
        <Sidebar>
          <SideTop>
            <Glyph name="sparkle" />
            <SpacerGrow />
            <ModeButton><Glyph name="listMode" /></ModeButton>
            <ModeButton><Glyph name="cardMode" /></ModeButton>
          </SideTop>
          <Tree>
            {SIDE.map(([icon, text, child, sel]) => (
              <TreeRow key={text} $child={child} $sel={sel}>
                <Glyph name={icon} />
                <span>{text}</span>
              </TreeRow>
            ))}
          </Tree>
        </Sidebar>
        <Gutter />
        <PanelColumn>
          <Panel>
            <PanelHead>×</PanelHead>
            <PanelTabs><PanelTab $on>构件列表</PanelTab><PanelTab>图纸管理</PanelTab></PanelTabs>
            <PanelTools>
              <ToolButton $w={68}><Glyph name="newI" /><span>新建</span><SmallCaret /></ToolButton>
              <ToolButton $w={59}><Glyph name="delI" /><span>删除</span></ToolButton>
              <ToolButton $w={57}><Glyph name="copyI" /><span>复制</span></ToolButton>
              <ToolButton $w={72}><Glyph name="layerI" /><span>层间复制</span></ToolButton>
              <MoreMark>▸▸</MoreMark>
            </PanelTools>
            <SearchBox><span>搜索构件...</span><Glyph name="search" size={14} /></SearchBox>
            <CompTree>
              <CompHead><CompTriangle />垫层</CompHead>
              <CompItem>DC-1</CompItem>
            </CompTree>
          </Panel>
          <Panel $fill>
            <PanelHead>×</PanelHead>
            <PanelTabs><PanelTab $on>属性列表</PanelTab><PanelTab>图层管理</PanelTab></PanelTabs>
            <HeadRow>
              <HeadBlank />
              <HeadCell>属性名称</HeadCell>
              <HeadCell $on>属性值</HeadCell>
              <HeadCut>附加</HeadCut>
            </HeadRow>
            {PROPS.map(r => (
              <Row key={r.n}>
                <IndexCell $on={r.sel}>{r.n}</IndexCell>
                <NameCell $blue={r.blue}>{r.plus && <PlusBox>+</PlusBox>}<span>{r.name}</span></NameCell>
                <ValueCell $shade={r.shade} $grey={r.grey} $sel={r.sel}>{r.value}</ValueCell>
                <ExtraCell>{r.check && <CheckBox />}</ExtraCell>
              </Row>
            ))}
            <FootIndex />
          </Panel>
        </PanelColumn>
        <Splitter><Grip /></Splitter>
        <Canvas><CadDrawing /></Canvas>
      </Main>

      <Menu>
        {MENU.map(([t, off]) => (
          <MenuItem key={t} $off={off}>
            <MenuIcon $off={off}><Glyph name="itemUp" size={14} /></MenuIcon>
            <span>{t}</span>
          </MenuItem>
        ))}
      </Menu>

      <ArrowLayer width={1747} height={934}>
        <polygon points="793,185 871,107 866,103 892,97 884,124 880,116" fill="#f44646" />
        <polygon points="1128,369 978,248 979,243 962,239 966,255 971.6,254" fill="#f44646" />
      </ArrowLayer>
    </Shell>
  );
}
